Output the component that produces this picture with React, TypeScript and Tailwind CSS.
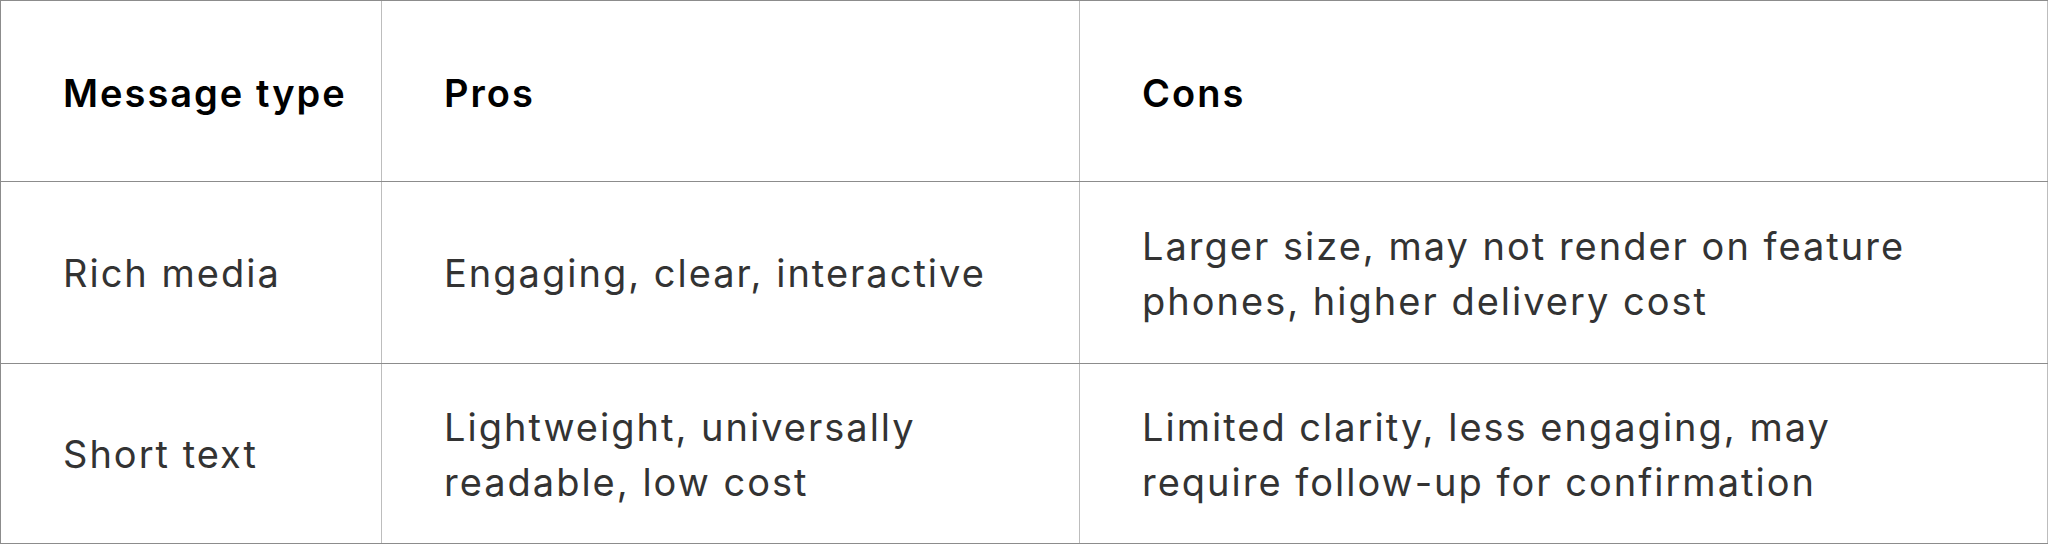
import React from 'react';

const rows = [
  {
    type: 'Rich media',
    pros: ['Engaging, clear, interactive'],
    cons: ['Larger size, may not render on feature', 'phones, higher delivery cost'],
  },
  {
    type: 'Short text',
    pros: ['Lightweight, universally', 'readable, low cost'],
    cons: ['Limited clarity, less engaging, may', 'require follow-up for confirmation'],
  },
];

const Lines: React.FC<{ lines: string[] }> = ({ lines }) => (
  <div className="whitespace-nowrap">
    {lines.map((l, i) => (
      <div key={i}>{l}</div>
    ))}
  </div>
);

export default function App() {
  const heights = ['h-[182px]', 'h-[180px]'];
  return (
    <div className="w-[2048px] h-[544px] bg-white font-['Inter',sans-serif] text-[38px] leading-[55px] tracking-[2px]">
      <div className="border-t border-l border-[#8c8c8c]">
        <div className="grid grid-cols-[381px_698px_968px] h-[181px] border-b border-[#8c8c8c]">
          <div className="flex items-center pl-[62px] pt-[4px] border-r border-[#bdbdbd] font-semibold text-black">Message type</div>
          <div className="flex items-center pl-[62px] pt-[4px] border-r border-[#bdbdbd] font-semibold text-black">Pros</div>
          <div className="flex items-center pl-[62px] pt-[4px] border-r border-[#bdbdbd] font-semibold text-black">Cons</div>
        </div>
        {rows.map((r, i) => (
          <div key={r.type} className={`grid grid-cols-[381px_698px_968px] ${heights[i]} border-b border-[#8c8c8c] text-[#333333]`}>
            <div className="flex items-center pl-[62px] pt-[2px] border-r border-[#bdbdbd]">{r.type}</div>
            <div className="flex items-center pl-[62px] pt-[2px] border-r border-[#bdbdbd]">
              <Lines lines={r.pros} />
            </div>
            <div className="flex items-center pl-[62px] pt-[2px] border-r border-[#bdbdbd]">
              <Lines lines={r.cons} />
            </div>
          </div>
        ))}
      </div>
    </div>
  );
}
